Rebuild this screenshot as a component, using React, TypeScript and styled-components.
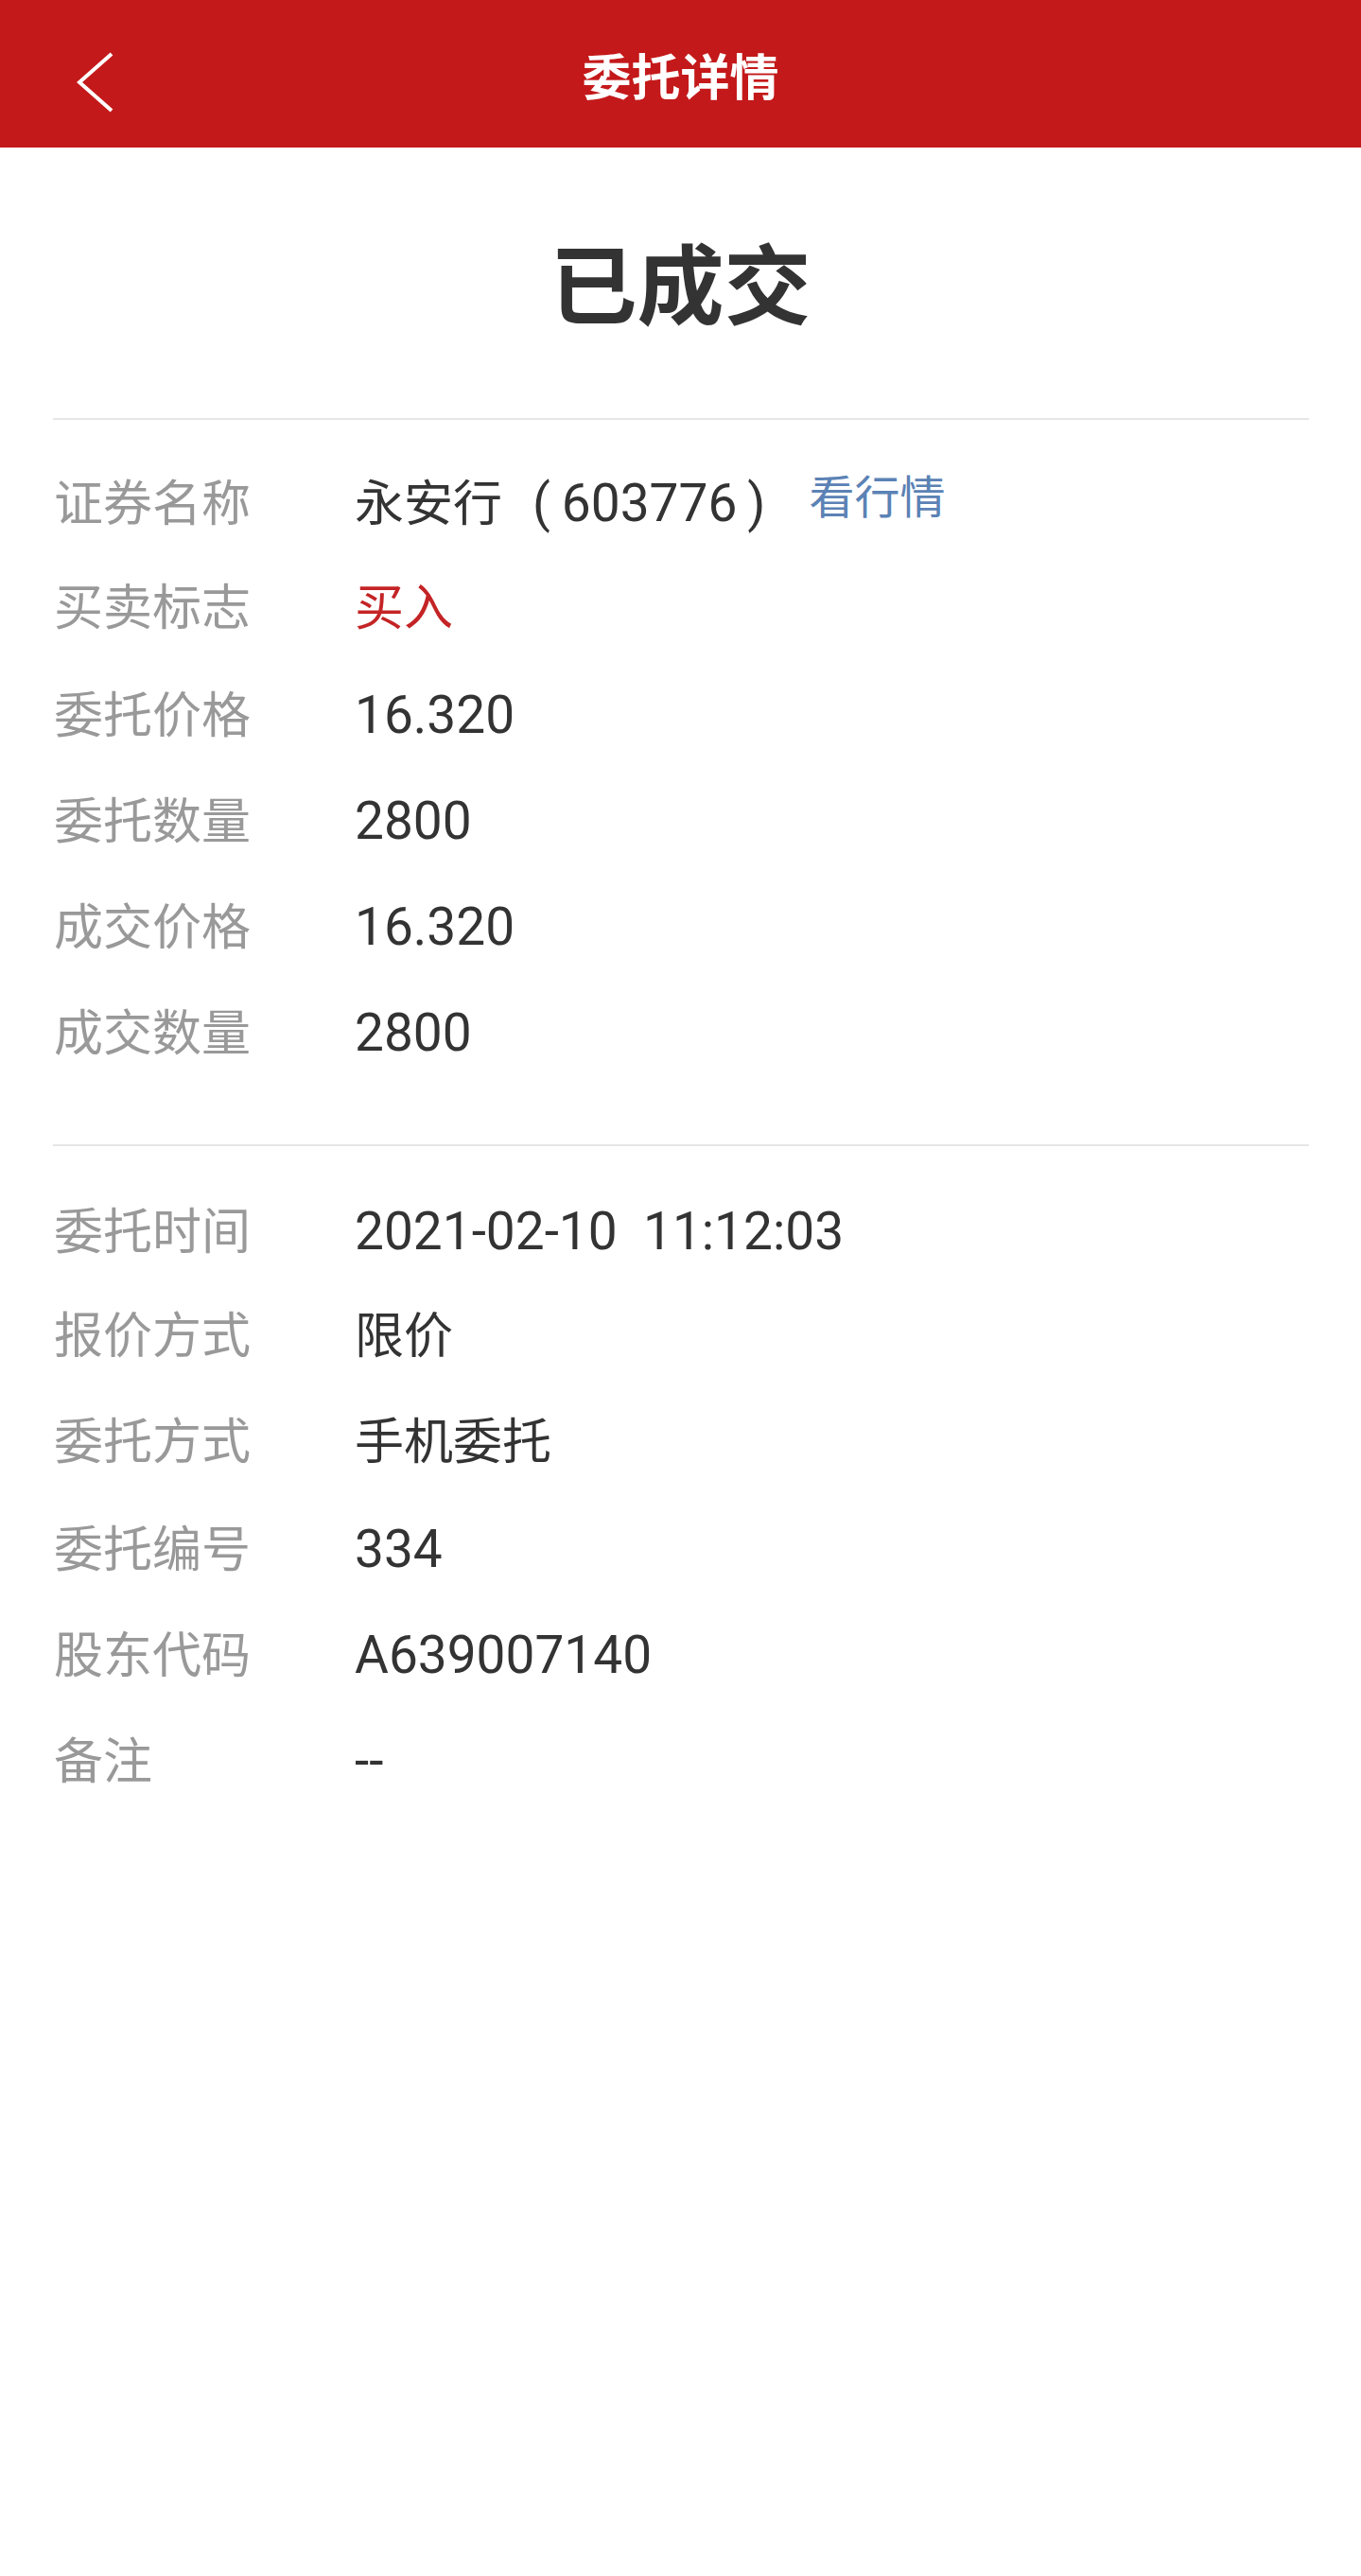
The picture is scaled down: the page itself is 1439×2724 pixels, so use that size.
import styled, { createGlobalStyle } from "styled-components";

const GlobalStyle = createGlobalStyle`
  body {
    margin: 0;
    background: #ffffff;
    font-family: Roboto, "Noto Sans CJK SC", sans-serif;
  }
`;

const Page = styled.div`
  min-height: 2724px;
  background: #ffffff;
`;

const NavBar = styled.header`
  height: 156px;
  background-color: #c4191a;
  display: grid;
  grid-template-columns: 1fr auto 1fr;
  align-items: center;
`;

const BackButton = styled.button`
  justify-self: start;
  margin: 18px 0 0 81px;
  padding: 0;
  border: none;
  background: none;
  display: flex;
`;

const NavTitle = styled.h1`
  margin: 0;
  font-size: 52px;
  font-weight: 700;
  color: #ffffff;
`;

const StatusBlock = styled.div`
  height: 286px;
  box-sizing: border-box;
  padding-bottom: 8px;
  display: flex;
  align-items: center;
  justify-content: center;
  font-size: 92px;
  font-weight: 700;
  color: #333333;
`;

const Divider = styled.hr`
  margin: 0 55px 0 56px;
  border: none;
  height: 2px;
  background: #e6e6e6;
`;

const Section = styled.section<{ $top: number; $bottom: number }>`
  padding: ${(p) => p.$top}px 56px ${(p) => p.$bottom}px 57px;
`;

const Row = styled.div`
  height: 112px;
  line-height: 112px;
  display: flex;
  align-items: baseline;
`;

const Label = styled.span`
  width: 318px;
  flex-shrink: 0;
  font-size: 52px;
  color: #999999;
`;

const Value = styled.span<{ $color?: string; $size?: number }>`
  font-size: ${(p) => p.$size ?? 55}px;
  color: ${(p) => p.$color ?? "#333333"};
  white-space: pre;
`;

const Paren = styled.span<{ $open?: boolean }>`
  font-size: 55px;
  color: #333333;
  margin: ${(p) => (p.$open ? "0 12px 0 32px" : "0 0 0 11px")};
`;

const QuoteLink = styled.a`
  align-self: center;
  line-height: normal;
  margin: 0 0 20px 46px;
  font-size: 48px;
  color: #5b82b5;
  text-decoration: none;
`;

interface Field {
  label: string;
  value: string;
  color?: string;
  cjk?: boolean;
}

const orderFields: Field[] = [
  { label: "买卖标志", value: "买入", color: "#c42426", cjk: true },
  { label: "委托价格", value: "16.320" },
  { label: "委托数量", value: "2800" },
  { label: "成交价格", value: "16.320" },
  { label: "成交数量", value: "2800" },
];

const extraFields: Field[] = [
  { label: "委托时间", value: "2021-02-10  11:12:03" },
  { label: "报价方式", value: "限价", cjk: true },
  { label: "委托方式", value: "手机委托", cjk: true },
  { label: "委托编号", value: "334" },
  { label: "股东代码", value: "A639007140" },
  { label: "备注", value: "--" },
];

function FieldRow({ f }: { f: Field }) {
  return (
    <Row>
      <Label>{f.label}</Label>
      <Value $color={f.color} $size={f.cjk ? 52 : 55}>
        {f.value}
      </Value>
    </Row>
  );
}

function App() {
  return (
    <Page>
      <GlobalStyle />
      <NavBar>
        <BackButton aria-label="返回">
          <svg width="40" height="64" viewBox="0 0 40 64">
            <polyline points="37,2 3,32 37,62" fill="none" stroke="#ffffff" strokeWidth="4" />
          </svg>
        </BackButton>
        <NavTitle>委托详情</NavTitle>
      </NavBar>

      <StatusBlock>已成交</StatusBlock>
      <Divider />

      <Section $top={32} $bottom={62}>
        <Row>
          <Label>证券名称</Label>
          <Value $size={52}>永安行</Value>
          <Paren $open>(</Paren>
          <Value>603776</Value>
          <Paren>)</Paren>
          <QuoteLink>看行情</QuoteLink>
        </Row>
        {orderFields.map((f) => (
          <FieldRow key={f.label} f={f} />
        ))}
      </Section>
      <Divider />

      <Section $top={34} $bottom={64}>
        {extraFields.map((f) => (
          <FieldRow key={f.label} f={f} />
        ))}
      </Section>
    </Page>
  );
}

export default App;
